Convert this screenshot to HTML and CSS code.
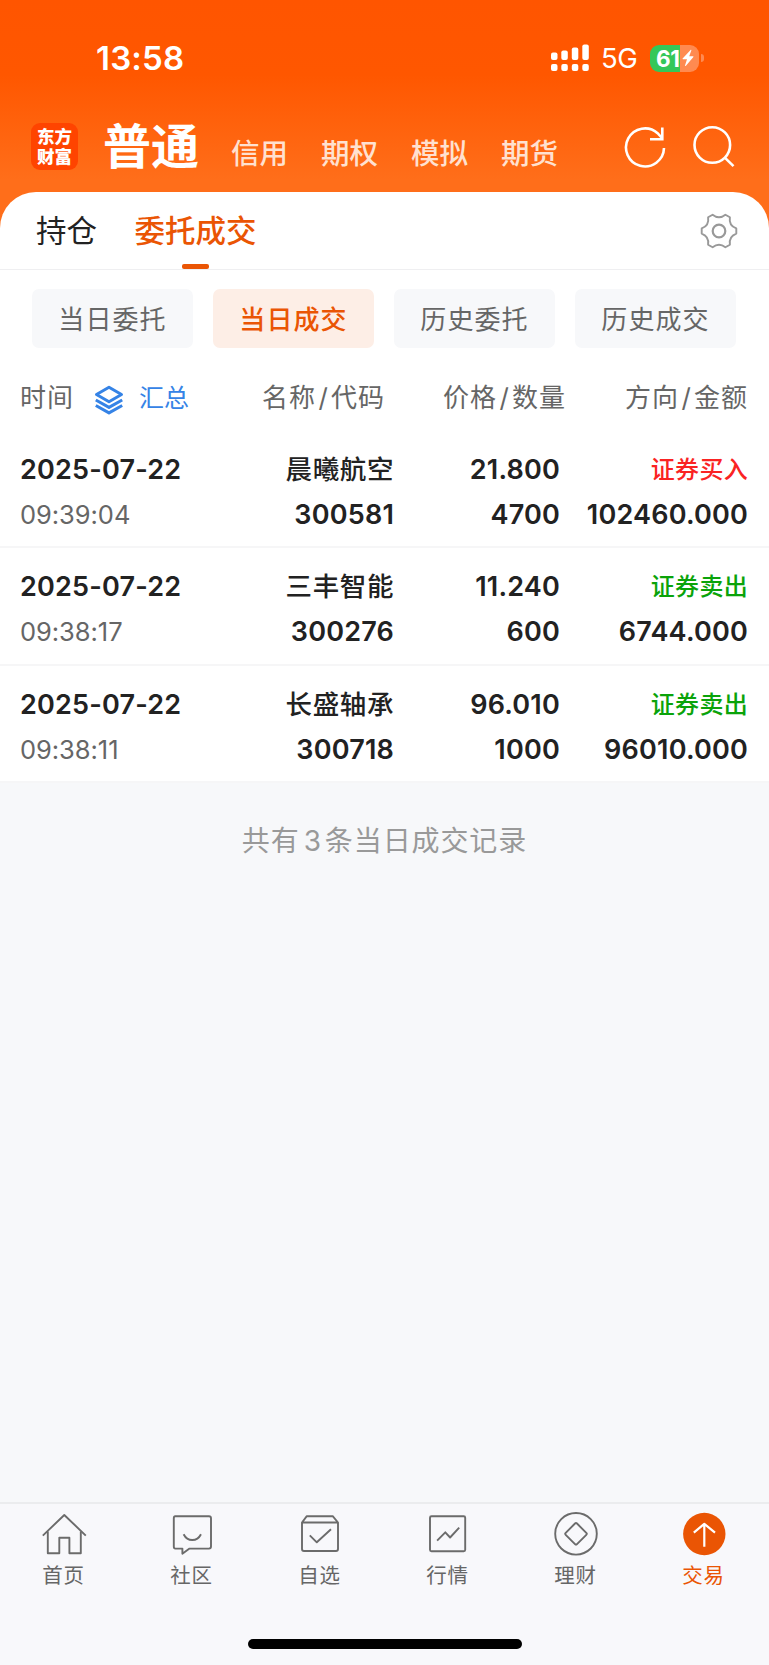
FILE: index.html
```html
<!DOCTYPE html>
<html lang="zh-CN">

<head>
    <meta charset="UTF-8">
    <meta name="viewport" content="width=device-width, initial-scale=1.0">
    <title>当日成交</title>
    <link rel="stylesheet" href="styles.css">
</head>

<body>
    <header class="header">
        <div class="status-bar">
            <span class="clock">13:58</span>
            <div class="status-icons">
                <svg class="signal" width="38" height="28" viewBox="0 0 38 28" fill="#fff">
                    <rect x="0" y="8.5" width="6.5" height="7.5" rx="2" />
                    <rect x="10.3" y="6.5" width="6.5" height="9.5" rx="2" />
                    <rect x="20.8" y="3.5" width="6.5" height="12.5" rx="2" />
                    <rect x="31.3" y="0.5" width="6.5" height="15.5" rx="2" />
                    <rect x="0" y="20" width="6.5" height="7" rx="2" />
                    <rect x="10.3" y="20" width="6.5" height="7" rx="2" />
                    <rect x="20.8" y="20" width="6.5" height="7" rx="2" />
                    <rect x="31.3" y="20" width="6.5" height="7" rx="2" />
                </svg>
                <span class="network">5G</span>
                <div class="battery">
                    <span class="battery-level">61</span>
                    <svg class="bolt" width="12" height="18" viewBox="0 0 12 18" fill="#fff">
                        <path d="M8.8 0.8 L0.6 9.6 Q0.3 10.2 1 10.3 L5 10.3 L3 16.6 Q3 17.4 3.7 16.9 L11.4 8.1 Q11.7 7.4 11 7.3 L7.2 7.3 L9.4 1.2 Q9.4 0.5 8.8 0.8Z" />
                    </svg>
                </div>
                <i class="battery-cap"></i>
            </div>
        </div>

        <nav class="account-nav">
            <div class="logo"><span>东方</span><span>财富</span></div>
            <a class="account current">普通</a>
            <a class="account">信用</a>
            <a class="account">期权</a>
            <a class="account">模拟</a>
            <a class="account">期货</a>
            <svg class="refresh" width="44" height="44" viewBox="0 0 44 44" fill="none" stroke="#fff" stroke-width="2.6">
                <path d="M41 23 A19 19 0 1 1 34.6 8.2 L38.5 12.5" />
                <path d="M39.3 2.5 V14.2 H27" />
            </svg>
            <svg class="search" width="44" height="44" viewBox="0 0 44 44" fill="none" stroke="#fff" stroke-width="2.6">
                <circle cx="20.3" cy="20" r="17.8" />
                <path d="M32.8 32.6 L41.5 41.2" />
            </svg>
        </nav>
    </header>

    <main class="panel">
        <div class="tabs">
            <a class="tab">持仓</a>
            <a class="tab active">委托成交</a>
            <svg class="gear" width="38" height="38" viewBox="-19 -19 38 38" fill="none" stroke="#999" stroke-width="1.9" stroke-linejoin="round">
                <path d="M17.3-2.6V2.6Q9.6 5.55 10.9 13.7L6.4 16.3Q0 11.1-6.4 16.3L-10.9 13.7Q-9.6 5.55-17.3 2.6V-2.6Q-9.6-5.55-10.9-13.7L-6.4-16.3Q0-11.1 6.4-16.3L10.9-13.7Q9.6-5.55 17.3-2.6Z" />
                <circle r="6.3" stroke-width="2.2" />
            </svg>
        </div>

        <div class="filters">
            <a class="filter">当日委托</a>
            <a class="filter active">当日成交</a>
            <a class="filter">历史委托</a>
            <a class="filter">历史成交</a>
        </div>

        <div class="table-head">
            <div class="time-head">
                <span>时间</span>
                <svg width="30" height="30" viewBox="0 0 30 30" fill="none" stroke="#3583e6" stroke-width="3" stroke-linejoin="round">
                    <path d="M15 2.3 L27.5 9.5 L15 16.7 L2.5 9.5Z" />
                    <path d="M1.8 15 L15 22.4 L28.2 15" />
                    <path d="M1.8 20.5 L15 27.9 L28.2 20.5" />
                </svg>
                <a class="summary">汇总</a>
            </div>
            <span>名称<i>/</i>代码</span>
            <span>价格<i>/</i>数量</span>
            <span>方向<i>/</i>金额</span>
        </div>

        <div class="deal">
            <div class="cell date"><b>2025-07-22</b><span>09:39:04</span></div>
            <div class="cell"><b class="name">晨曦航空</b><b>300581</b></div>
            <div class="cell"><b>21.800</b><b>4700</b></div>
            <div class="cell"><b class="side buy">证券买入</b><b>102460.000</b></div>
        </div>
        <div class="deal">
            <div class="cell date"><b>2025-07-22</b><span>09:38:17</span></div>
            <div class="cell"><b class="name">三丰智能</b><b>300276</b></div>
            <div class="cell"><b>11.240</b><b>600</b></div>
            <div class="cell"><b class="side sell">证券卖出</b><b>6744.000</b></div>
        </div>
        <div class="deal">
            <div class="cell date"><b>2025-07-22</b><span>09:38:11</span></div>
            <div class="cell"><b class="name">长盛轴承</b><b>300718</b></div>
            <div class="cell"><b>96.010</b><b>1000</b></div>
            <div class="cell"><b class="side sell">证券卖出</b><b>96010.000</b></div>
        </div>
    </main>

    <p class="total">共有<span>3</span>条当日成交记录</p>

    <footer class="footer">
        <nav class="bottom-nav">
            <a class="item">
                <svg width="46" height="46" viewBox="0 0 46 46">
                    <path d="M1.8 23.6 L23.3 3 L44.8 23.6" />
                    <path d="M6.8 19.5 V41.3 H18.3 V25.8 H28.4 V41.3 H39.8 V19.5" />
                </svg>
                <span>首页</span>
            </a>
            <a class="item">
                <svg width="46" height="46" viewBox="0 0 46 46">
                    <path d="M6.3 4.2 H40 Q42 4.2 42 6.2 V34.6 Q42 36.6 40 36.6 H20.5 L13.4 41.7 V36.6 H6.3 Q4.8 36.6 4.8 34.6 V6.2 Q4.8 4.2 6.3 4.2Z" />
                    <path d="M14.6 22.2 Q17.6 28 23.3 28 Q29 28 32 22.2" />
                </svg>
                <span>社区</span>
            </a>
            <a class="item">
                <svg width="46" height="46" viewBox="0 0 46 46">
                    <path d="M5 10.5 L9.8 4.2 H35.7 L41 10.5 V37 Q41 39 39 39 H7 Q5 39 5 37Z M5 10.5 H41" />
                    <path d="M12.8 23.3 L19.8 30.3 L34 17.2" />
                </svg>
                <span>自选</span>
            </a>
            <a class="item">
                <svg width="46" height="46" viewBox="0 0 46 46">
                    <rect x="5" y="4.2" width="35.2" height="35" rx="1.5" />
                    <path d="M12.1 28.6 L20.3 20.3 L25.1 25.5 L34.2 15.7" />
                </svg>
                <span>行情</span>
            </a>
            <a class="item">
                <svg width="46" height="46" viewBox="0 0 46 46">
                    <circle cx="23" cy="21.8" r="20.8" />
                    <path d="M22 11.5 Q23 10.5 24 11.5 L33.3 20.8 Q34.3 21.8 33.3 22.8 L24 32.1 Q23 33.1 22 32.1 L12.7 22.8 Q11.7 21.8 12.7 20.8Z" />
                </svg>
                <span>理财</span>
            </a>
            <a class="item active">
                <svg width="46" height="46" viewBox="0 0 46 46">
                    <circle class="disc" cx="23.3" cy="22" r="21.2" />
                    <path class="arrow" d="M23.3 34.8 V11.8 M12.8 20.6 L23.3 11.8 L34 20.6" />
                </svg>
                <span>交易</span>
            </a>
        </nav>
        <div class="home-indicator"></div>
    </footer>
</body>

</html>
```
FILE: styles.css
```css
:root {
    --orange: #ea5504;
    --text: #222;
    --grey: #666;
    --page: #f7f8fa;
}

* {
    margin: 0;
    padding: 0;
    box-sizing: border-box;
}

body {
    width: 769px;
    height: 1665px;
    overflow: hidden;
    display: flex;
    flex-direction: column;
    font-family: Inter, "Noto Sans CJK SC", sans-serif;
    color: var(--text);
    background-color: var(--page);
}

svg {
    display: block;
    flex: none;
}

/* header */
.header {
    height: 232px;
    flex: none;
    color: #fff;
    background: linear-gradient(#ff5500 0, #ff5700 75px, #ff6e1a 180px);
}

.status-bar {
    height: 116px;
    padding: 0 65px 0 96px;
    display: flex;
    justify-content: space-between;
    align-items: center;
}

.clock {
    font-size: 33px;
    font-weight: 600;
    letter-spacing: 0.2px;
}

.status-icons {
    display: flex;
    align-items: center;
}

.network {
    width: 61px;
    padding-left: 12px;
    font-size: 27.5px;
    letter-spacing: -0.5px;
}

.battery {
    width: 49px;
    height: 27px;
    border-radius: 9px;
    padding-left: 6px;
    display: flex;
    align-items: center;
    background: linear-gradient(90deg, #34c759 30px, #ff8a50 30px);
}

.battery-level {
    width: 26px;
    font-size: 22.5px;
    font-weight: 700;
    line-height: 27px;
    letter-spacing: -0.4px;
}

.battery-cap {
    width: 3px;
    height: 8px;
    margin-left: 2px;
    border-radius: 0 3px 3px 0;
    background-color: #ff8a50;
}

.account-nav {
    height: 61px;
    padding: 0 32px 0 31px;
    display: flex;
    align-items: center;
}

.logo {
    width: 47px;
    height: 47px;
    margin-right: 25px;
    border-radius: 9px;
    display: flex;
    flex-direction: column;
    align-items: center;
    justify-content: center;
    font-size: 17.5px;
    font-weight: 900;
    line-height: 19.5px;
    background-color: #ff4400;
}

.account {
    width: 90px;
    padding-top: 14px;
    font-size: 28.5px;
    font-weight: 500;
    line-height: 40px;
    color: #ffe1d0;
}

.account.current {
    width: 128px;
    padding-top: 0;
    font-size: 48px;
    font-weight: 700;
    line-height: 60px;
    color: #fff;
}

.refresh {
    margin-left: 32px;
}

.search {
    margin-left: 25px;
}

/* white sheet */
.panel {
    margin-top: -40px;
    flex: none;
    border-radius: 36px 36px 0 0;
    background-color: #fff;
}

.tabs {
    height: 78px;
    padding: 0 31px 0 36px;
    display: flex;
    align-items: center;
    border-bottom: 1px solid #efeff1;
}

.tab {
    height: 77px;
    margin-right: 37.5px;
    font-size: 30.5px;
    line-height: 78px;
}

.tab.active {
    display: flex;
    flex-direction: column;
    align-items: center;
    font-weight: 500;
    color: var(--orange);
}

.tab.active::after {
    content: "";
    width: 27px;
    height: 5px;
    margin-top: -6px;
    flex: none;
    border-radius: 2px;
    background-color: var(--orange);
}

.gear {
    margin-left: auto;
}

.filters {
    padding: 19px 32px 0;
    display: flex;
    gap: 20px;
}

.filter {
    width: 161px;
    height: 59px;
    border-radius: 7px;
    text-align: center;
    font-size: 26px;
    line-height: 61px;
    letter-spacing: 1.1px;
    color: var(--grey);
    background-color: #f7f8fa;
}

.filter.active {
    font-weight: 500;
    color: var(--orange);
    background-color: #fdeee6;
}

.table-head {
    height: 83px;
    padding: 9px 21px 0 20px;
    display: grid;
    grid-template-columns: 184px 181px 181px 182px;
    font-size: 26px;
    line-height: 82px;
    letter-spacing: 1px;
    text-align: right;
    color: var(--grey);
}

.table-head i {
    margin: 0 2px 0 2.5px;
    font-style: normal;
}

.time-head {
    display: flex;
    align-items: center;
    height: 82px;
}

.time-head svg {
    margin: 4px 15px 0 20px;
}

.summary {
    font-size: 25px;
    letter-spacing: 0;
    color: #3583e6;
}

.deal {
    height: 117.4px;
    padding: 16px 21px 0 20px;
    display: grid;
    grid-template-columns: 181px 193px 166px 188px;
    border-bottom: 2px solid #f6f6f7;
}

.cell {
    display: flex;
    flex-direction: column;
    align-items: flex-end;
    font-size: 27px;
    line-height: 45px;
    letter-spacing: 0.2px;
}

.cell b {
    height: 45px;
    font-weight: 600;
}

.cell .name {
    font-size: 26.5px;
    font-weight: 500;
    letter-spacing: 0.6px;
}

.cell .side {
    font-size: 24px;
    font-weight: 500;
    letter-spacing: 0.3px;
}

.buy {
    color: #fa2323;
}

.sell {
    color: #0aa30a;
}

.date {
    align-items: flex-start;
}

.date span {
    font-size: 25.5px;
    letter-spacing: -0.05px;
    color: var(--grey);
}

.total {
    margin-top: 34px;
    text-align: center;
    font-size: 28px;
    line-height: 48px;
    letter-spacing: 0.9px;
    color: #999;
}

.total span {
    margin: 0 3px 0 4px;
}

/* bottom */
.footer {
    height: 163px;
    margin-top: auto;
    flex: none;
    border-top: 2px solid #ebecee;
    background-color: #f8f8fb;
}

.bottom-nav {
    width: 768px;
    height: 135px;
    display: flex;
}

.item {
    flex: 1;
    padding-top: 8px;
    display: flex;
    flex-direction: column;
    align-items: center;
    font-size: 20.5px;
    line-height: 30px;
    letter-spacing: 0.8px;
    color: var(--grey);
}

.item svg {
    margin-bottom: 3px;
    fill: none;
    stroke: #6b6b6b;
    stroke-width: 1.9;
    stroke-linejoin: round;
}

.item span {
    margin-left: -1px;
}

.item.active {
    color: var(--orange);
}

.item .disc {
    fill: var(--orange);
    stroke: none;
}

.item .arrow {
    stroke: #fff;
    stroke-width: 2.2;
}

.home-indicator {
    width: 274px;
    height: 10px;
    margin-left: 247.5px;
    border-radius: 5px;
    background-color: #000;
}
```
